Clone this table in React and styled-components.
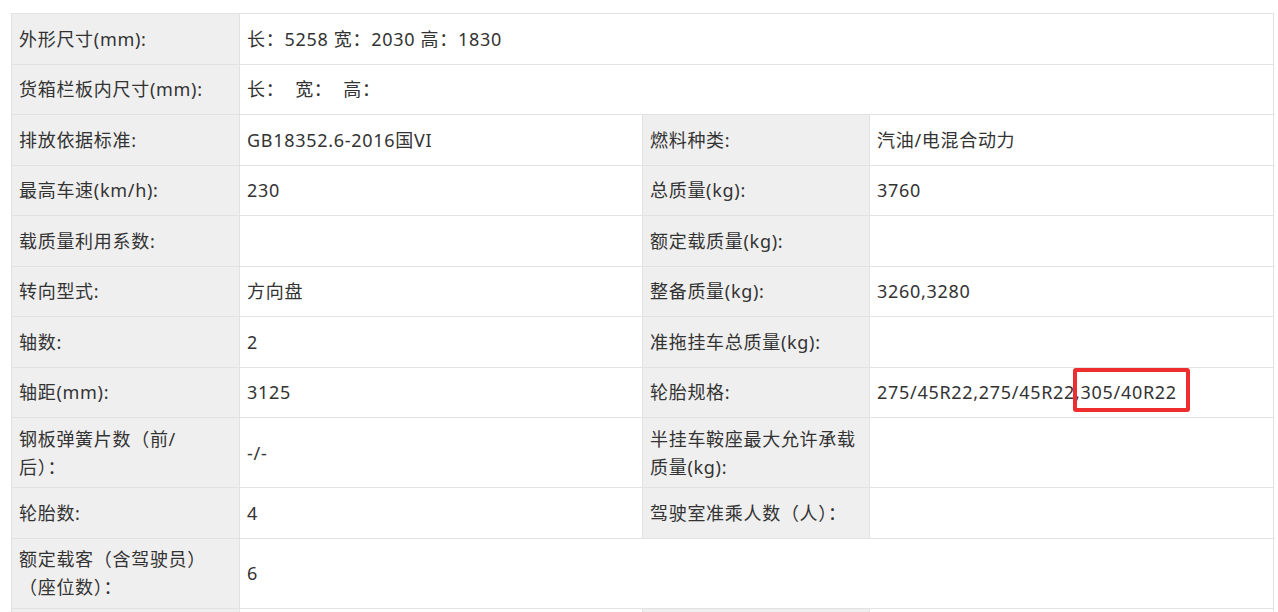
import React from 'react';
import styled, { createGlobalStyle } from 'styled-components';

const Global = createGlobalStyle`
  html, body { margin: 0; padding: 0; background: #fff; }
  body { font-family: "Noto Sans", "Noto Sans CJK SC", sans-serif; }
`;

const Page = styled.div`
  padding: 13px 5px 0 11px;
  height: 612px;
  overflow: hidden;
  box-sizing: border-box;
`;

const Table = styled.table`
  width: 1262px;
  border-collapse: collapse;
  table-layout: fixed;
  font-size: 18px;
  letter-spacing: 0.7px;
  color: #333;
`;

const Col = styled.col`
  width: ${p => p.$w}px;
`;

const Cell = styled.td`
  border: 1px solid #e2e2e2;
  padding: 6.5px 6px 6.5px 7px;
  height: 36.5px;
  line-height: 28px;
  vertical-align: middle;
  background: ${p => (p.$label ? '#efefef' : '#fff')};
  white-space: pre;
`;

const Marked = styled.span`
  position: relative;
  &::after {
    content: '';
    position: absolute;
    left: -8px;
    right: -13px;
    top: -12px;
    bottom: -8px;
    border: 4px solid #ee2e2e;
    border-radius: 3px;
  }
`;

const rows = [
  { l: '外形尺寸(mm):', v: '长：5258 宽：2030 高：1830', wide: true },
  { l: '货箱栏板内尺寸(mm):', v: '长：  宽：  高：', wide: true },
  { l: '排放依据标准:', v: 'GB18352.6-2016国VI', l2: '燃料种类:', v2: '汽油/电混合动力' },
  { l: '最高车速(km/h):', v: '230', l2: '总质量(kg):', v2: '3760' },
  { l: '载质量利用系数:', v: '', l2: '额定载质量(kg):', v2: '' },
  { l: '转向型式:', v: '方向盘', l2: '整备质量(kg):', v2: '3260,3280' },
  { l: '轴数:', v: '2', l2: '准拖挂车总质量(kg):', v2: '' },
  {
    l: '轴距(mm):', v: '3125', l2: '轮胎规格:',
    v2: <>275/45R22,275/45R22,<Marked>305/40R22</Marked></>,
  },
  { l: '钢板弹簧片数（前/\n后）：', v: '-/-', l2: '半挂车鞍座最大允许承载\n质量(kg):', v2: '' },
  { l: '轮胎数:', v: '4', l2: '驾驶室准乘人数（人）：', v2: '' },
  { l: '额定载客（含驾驶员）\n（座位数）：', v: '6', wide: true },
  { l: '', v: '', l2: '', v2: '' },
];

export default function App() {
  return (
    <Page>
      <Global />
      <Table>
        <colgroup>
          <Col $w={228} />
          <Col $w={403} />
          <Col $w={227} />
          <Col $w={404} />
        </colgroup>
        <tbody>
          {rows.map((r, i) => (
            <tr key={i}>
              <Cell $label>{r.l}</Cell>
              {r.wide ? (
                <Cell colSpan={3}>{r.v}</Cell>
              ) : (
                <>
                  <Cell>{r.v}</Cell>
                  <Cell $label>{r.l2}</Cell>
                  <Cell>{r.v2}</Cell>
                </>
              )}
            </tr>
          ))}
        </tbody>
      </Table>
    </Page>
  );
}
